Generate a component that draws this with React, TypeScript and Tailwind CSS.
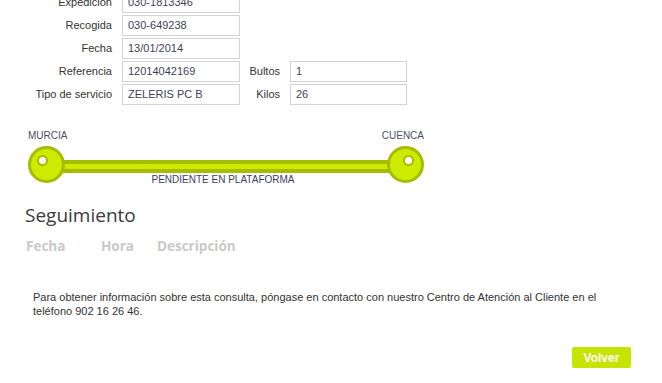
import React from "react";

const arial = { fontFamily: '"Liberation Sans", Arial, sans-serif' };

function Field({ label, value, labelW, boxW }: { label: string; value: string; labelW: string; boxW: string }) {
  return (
    <div className="flex items-center">
      <div className={`${labelW} text-right text-[11px] text-[#333]`}>{label}</div>
      <div className={`${boxW} ml-[10px] h-[21px] border border-[#d3d3d3] bg-white pl-[5px] flex items-center text-[11px] text-[#3f3f55]`}>
        {value}
      </div>
    </div>
  );
}

function Knob({ right }: { right?: boolean }) {
  return (
    <div className="relative z-10 w-[37px] h-[37px] shrink-0 rounded-full border-[3px] border-[#a6bc00] bg-[#cbeb00]">
      <div
        className={
          right
            ? "absolute left-[13px] top-[6px] w-[11px] h-[11px] rounded-full border-2 border-[#a6bc00] bg-white"
            : "absolute left-[6px] top-[6px] w-[11px] h-[11px] rounded-full border-2 border-[#a6bc00] bg-white"
        }
      />
    </div>
  );
}

export default function App() {
  return (
    <div className="w-[662px] h-[383px] overflow-hidden bg-white" style={arial}>
      {/* datos del envío */}
      <div className="mt-[-8px] flex flex-col gap-[2px]">
        <Field label="Expedición" value="030-1813346" labelW="w-[112px]" boxW="w-[118px]" />
        <Field label="Recogida" value="030-649238" labelW="w-[112px]" boxW="w-[118px]" />
        <Field label="Fecha" value="13/01/2014" labelW="w-[112px]" boxW="w-[118px]" />
        <div className="flex">
          <Field label="Referencia" value="12014042169" labelW="w-[112px]" boxW="w-[118px]" />
          <Field label="Bultos" value="1" labelW="w-[40px]" boxW="w-[117px]" />
        </div>
        <div className="flex">
          <Field label="Tipo de servicio" value="ZELERIS PC B" labelW="w-[112px]" boxW="w-[118px]" />
          <Field label="Kilos" value="26" labelW="w-[40px]" boxW="w-[117px]" />
        </div>
      </div>

      {/* recorrido */}
      <div className="ml-[28px] w-[396px] mt-[25px]">
        <div className="flex justify-between text-[10px] leading-[12px] text-[#4d4d5e]">
          <span>MURCIA</span>
          <span>CUENCA</span>
        </div>
        <div className="relative mt-[4px] flex items-start">
          <Knob />
          <div className="flex-1 mx-[-8px] mt-[14px] h-[13px] border-y-4 border-[#a6bc00] bg-[#cbeb00]" />
          <Knob right />
          <div className="absolute left-0 right-0 top-[28px] text-center text-[10px] leading-[12px] text-[#3d3d66] pr-[6px]">
            PENDIENTE EN PLATAFORMA
          </div>
        </div>
      </div>

      {/* seguimiento */}
      <div className="ml-[25px] mt-[19px] text-[19px] leading-[26px] text-[#3a3a3a]" style={{ fontFamily: '"Open Sans", sans-serif' }}>
        Seguimiento
      </div>
      <div
        className="mt-[9px] ml-[26px] flex text-[13.5px] leading-[18px] font-bold text-[#c9c9c9]"
        style={{ fontFamily: '"Open Sans", sans-serif' }}
      >
        <span className="w-[75px]">Fecha</span>
        <span className="w-[56px]">Hora</span>
        <span>Descripción</span>
      </div>

      <p className="ml-[33px] mt-[35px] w-[580px] text-[11px] leading-[14px] text-[#333]">
        Para obtener información sobre esta consulta, póngase en contacto con nuestro Centro de Atención al Cliente en el teléfono 902 16 26 46.
      </p>

      <div className="mt-[29px] flex justify-end pr-[31px]">
        <button className="w-[59px] h-[21px] rounded-[2px] bg-[#c5e400] text-white text-[12px] font-bold">Volver</button>
      </div>
    </div>
  );
}
